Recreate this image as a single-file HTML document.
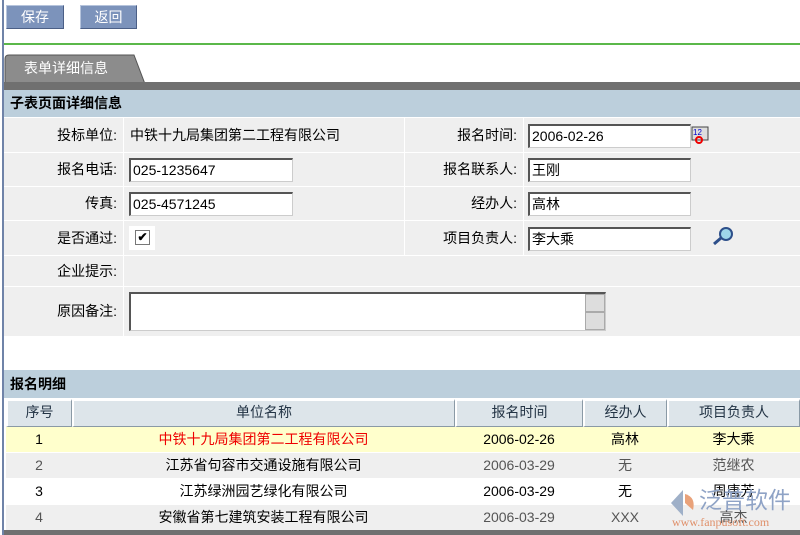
<!DOCTYPE html>
<html><head><meta charset="utf-8"><style>
*{margin:0;padding:0;box-sizing:border-box}
html,body{width:800px;height:535px;overflow:hidden}
body{background:#fff;position:relative;font-family:"Liberation Sans","Noto Sans CJK SC",sans-serif;font-size:14px;color:#000}
.a{position:absolute;white-space:nowrap}
.btn{background:#7c93bb;color:#fff;border:1px solid #4b5f86;border-top-color:#b6c4dc;border-left-color:#b6c4dc;font-size:14px;text-align:center;line-height:22px}
.cell{position:absolute;background:#efefef}
.lbl{text-align:right;padding-right:6px}
.inp{position:absolute;background:#fff;border:2px solid #555;border-right-color:#ccc;border-bottom-color:#ccc;border-width:2px 1px 1px 2px;height:24px;line-height:20px;padding-left:2px;font-size:14px}
.hd{position:absolute;left:4px;right:0;background:#bccfdc;font-weight:bold;font-size:14px;padding-left:6px}
.th{position:absolute;background:#dde5ea;border-left:2px solid #fff;border-top:2px solid #fff;border-right:1px solid #8a9aa6;border-bottom:1px solid #8a9aa6;text-align:center;line-height:23px;color:#234;font-size:14px}
.td{position:absolute;text-align:center;line-height:26px;font-size:14px;white-space:nowrap}
</style></head><body>
<div class="a" style="left:2px;top:0;width:2px;height:535px;background:#6f83a8"></div>
<div class="a btn" style="left:6px;top:5px;width:58px;height:24px">保存</div>
<div class="a btn" style="left:80px;top:5px;width:57px;height:24px">返回</div>
<div class="a" style="left:4px;top:43px;width:796px;height:2px;background:#5bb84a"></div>
<svg class="a" style="left:4px;top:54px" width="142" height="30"><path d="M1 30 V5 Q1 1 5 1 H130 L141 30 Z" fill="#8c8c8c" stroke="#555"/></svg>
<div class="a" style="left:24px;top:58px;color:#fff;font-size:14px">表单详细信息</div>
<div class="a" style="left:4px;top:82px;width:796px;height:8px;background:#707070"></div>
<div class="hd" style="top:90px;height:27px;line-height:27px">子表页面详细信息</div>
<div class="cell lbl" style="left:4px;top:118px;width:119px;height:34px;line-height:34px">投标单位:</div>
<div class="cell" style="left:124px;top:118px;width:280px;height:34px;line-height:34px;padding-left:6px">中铁十九局集团第二工程有限公司</div>
<div class="cell lbl" style="left:405px;top:118px;width:118px;height:34px;line-height:34px">报名时间:</div>
<div class="cell" style="left:524px;top:118px;width:276px;height:34px"></div>
<div class="cell lbl" style="left:4px;top:153px;width:119px;height:33px;line-height:33px">报名电话:</div>
<div class="cell" style="left:124px;top:153px;width:280px;height:33px"></div>
<div class="cell lbl" style="left:405px;top:153px;width:118px;height:33px;line-height:33px">报名联系人:</div>
<div class="cell" style="left:524px;top:153px;width:276px;height:33px"></div>
<div class="cell lbl" style="left:4px;top:187px;width:119px;height:33px;line-height:33px">传真:</div>
<div class="cell" style="left:124px;top:187px;width:280px;height:33px"></div>
<div class="cell lbl" style="left:405px;top:187px;width:118px;height:33px;line-height:33px">经办人:</div>
<div class="cell" style="left:524px;top:187px;width:276px;height:33px"></div>
<div class="cell lbl" style="left:4px;top:221px;width:119px;height:34px;line-height:34px">是否通过:</div>
<div class="cell" style="left:124px;top:221px;width:280px;height:34px"></div>
<div class="cell lbl" style="left:405px;top:221px;width:118px;height:34px;line-height:34px">项目负责人:</div>
<div class="cell" style="left:524px;top:221px;width:276px;height:34px"></div>
<div class="cell lbl" style="left:4px;top:256px;width:119px;height:30px;line-height:30px">企业提示:</div>
<div class="cell" style="left:124px;top:256px;width:676px;height:30px"></div>
<div class="cell lbl" style="left:4px;top:287px;width:119px;height:49px;line-height:49px">原因备注:</div>
<div class="cell" style="left:124px;top:287px;width:676px;height:49px"></div>
<div class="inp" style="left:528px;top:124px;width:163px">2006-02-26</div>
<div class="inp" style="left:129px;top:158px;width:164px">025-1235647</div>
<div class="inp" style="left:528px;top:158px;width:163px">王刚</div>
<div class="inp" style="left:129px;top:192px;width:164px">025-4571245</div>
<div class="inp" style="left:528px;top:192px;width:163px">高林</div>
<div class="inp" style="left:528px;top:227px;width:163px">李大乘</div>
<div class="a" style="left:129px;top:226px;width:26px;height:24px;background:#fff"></div>
<div class="a" style="left:135px;top:230px;width:15px;height:15px;border:1px solid #777;background:#fff;font-size:12px;line-height:13px;text-align:center;font-weight:bold">✔</div>
<div class="inp" style="left:129px;top:292px;width:477px;height:39px"></div>
<div class="a" style="left:585px;top:294px;width:20px;height:18px;background:#ddd;border:1px solid #aaa"></div>
<div class="a" style="left:585px;top:312px;width:20px;height:18px;background:#ddd;border:1px solid #aaa"></div>
<svg class="a" style="left:690px;top:125px" width="20" height="20"><rect x="2" y="2" width="16" height="13" fill="#ddd" stroke="#444"/><text x="3" y="10" font-size="8" fill="#00c" font-family="Liberation Sans">12</text><circle cx="9" cy="15" r="3" fill="none" stroke="#e00" stroke-width="2"/></svg>
<svg class="a" style="left:711px;top:226px" width="24" height="20"><circle cx="15" cy="8" r="6" fill="#9fd6ea" stroke="#2d4f8a" stroke-width="2"/><path d="M10 12 L3 18" stroke="#2d4f8a" stroke-width="3"/></svg>
<div class="hd" style="top:370px;height:28px;line-height:28px">报名明细</div>
<div class="th" style="left:6px;top:399px;width:66px;height:28px">序号</div>
<div class="th" style="left:72px;top:399px;width:383px;height:28px">单位名称</div>
<div class="th" style="left:455px;top:399px;width:128px;height:28px">报名时间</div>
<div class="th" style="left:583px;top:399px;width:84px;height:28px">经办人</div>
<div class="th" style="left:667px;top:399px;width:133px;height:28px">项目负责人</div>
<div class="a" style="left:6px;top:427px;width:794px;height:25px;background:#ffffcc"></div>
<div class="a" style="left:6px;top:453px;width:794px;height:25px;background:#efefef"></div>
<div class="a" style="left:6px;top:505px;width:794px;height:25px;background:#efefef"></div>
<div class="td" style="left:6px;top:426px;width:66px">1</div>
<div class="td" style="left:72px;top:426px;width:383px;color:#e00">中铁十九局集团第二工程有限公司</div>
<div class="td" style="left:455px;top:426px;width:128px">2006-02-26</div>
<div class="td" style="left:583px;top:426px;width:84px">高林</div>
<div class="td" style="left:667px;top:426px;width:133px">李大乘</div>
<div class="td" style="left:6px;top:452px;width:66px;color:#555">2</div>
<div class="td" style="left:72px;top:452px;width:383px">江苏省句容市交通设施有限公司</div>
<div class="td" style="left:455px;top:452px;width:128px;color:#555">2006-03-29</div>
<div class="td" style="left:583px;top:452px;width:84px;color:#555">无</div>
<div class="td" style="left:667px;top:452px;width:133px;color:#555">范继农</div>
<div class="td" style="left:6px;top:478px;width:66px">3</div>
<div class="td" style="left:72px;top:478px;width:383px">江苏绿洲园艺绿化有限公司</div>
<div class="td" style="left:455px;top:478px;width:128px">2006-03-29</div>
<div class="td" style="left:583px;top:478px;width:84px">无</div>
<div class="td" style="left:667px;top:478px;width:133px">周唐芳</div>
<div class="td" style="left:6px;top:504px;width:66px;color:#555">4</div>
<div class="td" style="left:72px;top:504px;width:383px">安徽省第七建筑安装工程有限公司</div>
<div class="td" style="left:455px;top:504px;width:128px;color:#555">2006-03-29</div>
<div class="td" style="left:583px;top:504px;width:84px;color:#555">XXX</div>
<div class="td" style="left:667px;top:504px;width:133px;color:#555">高杰</div>
<div class="a" style="left:4px;top:530px;width:796px;height:5px;background:#707070"></div>
<svg class="a" style="left:668px;top:488px" width="30" height="30"><path d="M15 2 L3 15 L15 28 Z" fill="#9fb0c8"/><path d="M17 6 Q28 9 25 22 L17 15 Z" fill="#e9a27a"/></svg>
<div class="a" style="left:699px;top:486px;font-size:23px;line-height:28px;color:#8fa3c6">泛普软件</div>
<div class="a" style="left:672px;top:515px;font-size:12px;color:#e0906a;font-family:'Liberation Serif',serif">www.fanpusoft.com</div>
</body></html>
